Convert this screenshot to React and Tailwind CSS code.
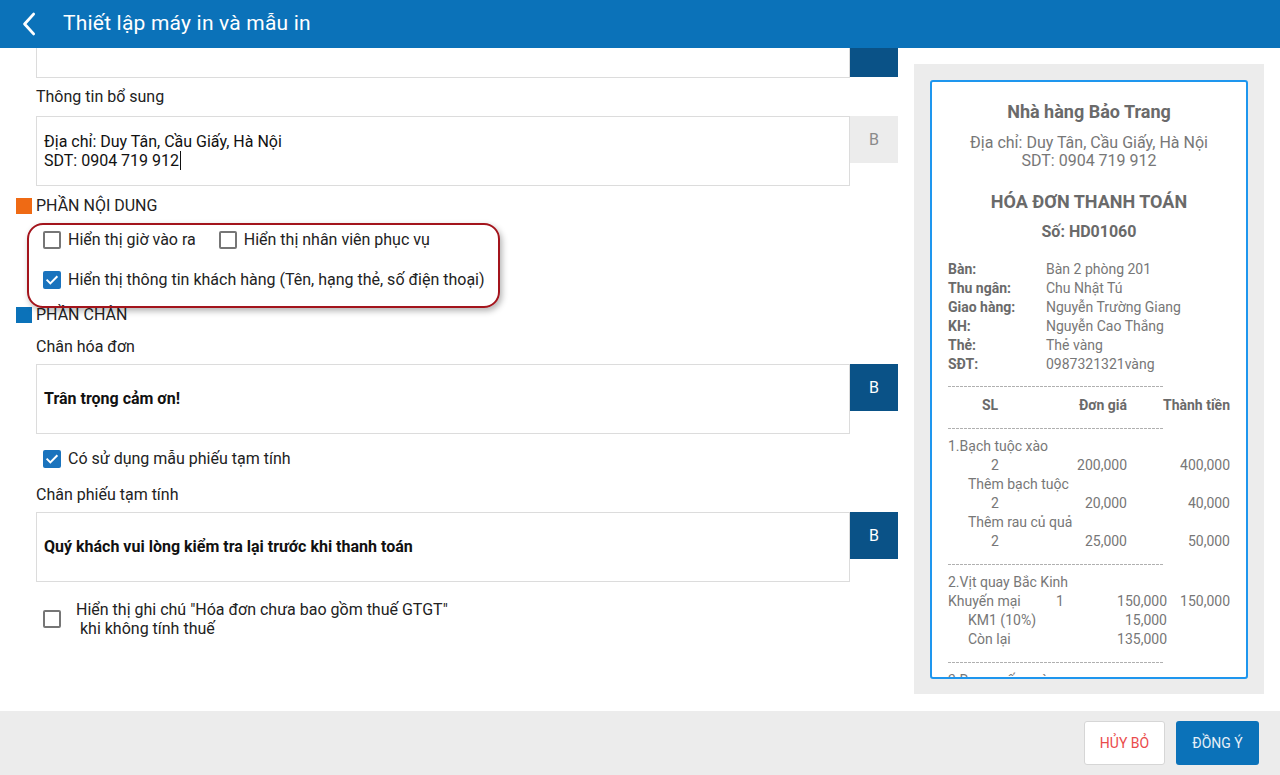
import React from "react";

function Checkbox({ checked }) {
  if (checked) {
    return (
      <span className="flex h-[18px] w-[18px] shrink-0 items-center justify-center rounded-[2px] bg-[#1a73bd]">
        <svg viewBox="0 0 24 24" className="h-4 w-4" fill="none" stroke="white" strokeWidth="3" strokeLinecap="square">
          <path d="M5 12.5l4.5 4.5L19 7.5" />
        </svg>
      </span>
    );
  }
  return <span className="block h-[18px] w-[18px] shrink-0 rounded-[2px] border-2 border-[#767676]" />;
}

function BButton({ dark }) {
  return (
    <button
      type="button"
      className={
        dark
          ? "flex h-[47px] w-12 items-center justify-center bg-[#0a5287] text-[16px] text-white"
          : "flex h-[47px] w-12 items-center justify-center bg-[#ececec] text-[16px] text-[#8a8a8a]"
      }
    >
      B
    </button>
  );
}

function Heading({ color, children }) {
  return (
    <div className="flex h-[30px] items-center gap-1 text-[16px] text-[#222]">
      <span className={`h-4 w-4 ${color}`} />
      <span>{children}</span>
    </div>
  );
}

function Dashes() {
  return <div className="h-px w-[215px] bg-[repeating-linear-gradient(90deg,#b0b0b0_0_3px,transparent_3px_4px)]" />;
}

const info = [
  ["Bàn:", "Bàn 2 phòng 201"],
  ["Thu ngân:", "Chu Nhật Tú"],
  ["Giao hàng:", "Nguyễn Trường Giang"],
  ["KH:", "Nguyễn Cao Thắng"],
  ["Thẻ:", "Thẻ vàng"],
  ["SĐT:", "0987321321vàng"],
];

function ItemRow({ qty, price, total }) {
  return (
    <div className="flex h-[19px] items-center">
      <span className="w-[94px] text-center">{qty}</span>
      <span className="w-[85px] text-right">{price}</span>
      <span className="flex-1 text-right">{total}</span>
    </div>
  );
}

function Receipt() {
  return (
    <div className="h-[599px] overflow-hidden rounded-[3px] border-2 border-[#1e96ee] bg-white text-[#777]">
      <div className="pt-[18px] text-center">
        <div className="text-[18px] font-bold leading-6 text-[#6a6a6a]">Nhà hàng Bảo Trang</div>
        <div className="mt-[10px] text-[16px] leading-[18px]">
          <div>Địa chỉ: Duy Tân, Cầu Giấy, Hà Nội</div>
          <div>SDT: 0904 719 912</div>
        </div>
        <div className="mt-5 text-[18px] font-bold leading-6 text-[#6a6a6a]">HÓA ĐƠN THANH TOÁN</div>
        <div className="mt-2 text-[16px] font-bold leading-5 text-[#6a6a6a]">Số: HD01060</div>
      </div>
      <div className="px-4 text-[14px]">
        <div className="mt-[18px]">
          {info.map(([k, v]) => (
            <div key={k} className="flex h-[19px] items-center">
              <span className="w-[98px] font-bold text-[#6a6a6a]">{k}</span>
              <span>{v}</span>
            </div>
          ))}
        </div>
        <div className="mt-3">
          <Dashes />
        </div>
        <div className="mt-[9px] flex h-[19px] items-center font-bold text-[#6a6a6a]">
          <span className="w-[84px] text-center">SL</span>
          <span className="w-[95px] text-right">Đơn giá</span>
          <span className="flex-1 text-right">Thành tiền</span>
        </div>
        <div className="mt-[13px]">
          <Dashes />
        </div>
        <div className="mt-2">
          <div className="flex h-[19px] items-center">1.Bạch tuộc xào</div>
          <ItemRow qty="2" price="200,000" total="400,000" />
          <div className="flex h-[19px] items-center pl-5">Thêm bạch tuộc</div>
          <ItemRow qty="2" price="20,000" total="40,000" />
          <div className="flex h-[19px] items-center pl-5">Thêm rau củ quả</div>
          <ItemRow qty="2" price="25,000" total="50,000" />
        </div>
        <div className="mt-[13px]">
          <Dashes />
        </div>
        <div className="mt-2">
          <div className="flex h-[19px] items-center">2.Vịt quay Bắc Kinh</div>
          <div className="flex h-[19px] items-center">
            <span className="w-[108px]">Khuyến mại</span>
            <span className="w-5">1</span>
            <span className="w-[91px] text-right">150,000</span>
            <span className="flex-1 text-right">150,000</span>
          </div>
          <div className="flex h-[19px] w-[219px] items-center justify-between pl-5">
            <span>KM1 (10%)</span>
            <span>15,000</span>
          </div>
          <div className="flex h-[19px] w-[219px] items-center justify-between pl-5">
            <span>Còn lại</span>
            <span>135,000</span>
          </div>
        </div>
        <div className="mt-[13px]">
          <Dashes />
        </div>
        <div className="mt-2">
          <div className="flex h-[19px] items-center">3.Rau muống xào</div>
        </div>
      </div>
    </div>
  );
}

export default function App() {
  return (
    <div className="flex h-[775px] w-[1280px] flex-col overflow-hidden bg-white font-['Roboto',sans-serif]">
      <header className="flex h-12 shrink-0 items-center bg-[#0b72b9] text-white">
        <button type="button" className="ml-[20px] flex h-8 w-5 items-center justify-center">
          <svg viewBox="0 0 20 28" className="h-[26px] w-[18px]" fill="none" stroke="white" strokeWidth="3.2" strokeLinecap="round" strokeLinejoin="round">
            <path d="M14 3L4 14l10 11" />
          </svg>
        </button>
        <h1 className="ml-[23px] text-[21px] font-normal tracking-[0.2px]">Thiết lập máy in và mẫu in</h1>
      </header>

      <main className="flex flex-1">
        <section className="w-[898px] pl-4">
          <div className="flex">
            <div className="ml-5 h-[30px] w-[814px] border-x border-b border-[#dcdcdc]" />
            <div className="h-[29px] w-12 bg-[#0a5287]" />
          </div>

          <div className="flex h-[38px] items-center pl-5 text-[16px] text-[#222]">Thông tin bổ sung</div>
          <div className="flex pl-5">
            <div className="flex h-[70px] w-[814px] flex-col justify-center border border-[#dcdcdc] pl-[7px] text-[16px] leading-[19px] text-[#111]">
              <div>Địa chỉ: Duy Tân, Cầu Giấy, Hà Nội</div>
              <div className="flex items-center">
                SDT: 0904 719 912
                <span className="ml-px inline-block h-[19px] w-px bg-[#111]" />
              </div>
            </div>
            <BButton />
          </div>

          <div className="flex h-[38px] items-center gap-1 pt-px text-[16px] text-[#222]">
            <span className="h-4 w-4 bg-[#ef6a14]" />
            <span>PHẦN NỘI DUNG</span>
          </div>

          <div className="relative">
            <div className="pointer-events-none absolute left-[11px] top-[-1px] h-[85px] w-[473px] rounded-[16px] border-2 border-[#a3141c] shadow-[2px_3px_6px_rgba(0,0,0,0.3)]" />
            <div className="flex h-[32px] items-center pl-[27px] text-[16px] text-[#222]">
              <Checkbox />
              <span className="ml-[7px]">Hiển thị giờ vào ra</span>
              <span className="ml-[23px] flex">
                <Checkbox />
              </span>
              <span className="ml-[7px]">Hiển thị nhân viên phục vụ</span>
            </div>
            <div className="flex h-[44px] items-center pl-[27px] pt-1 text-[16px] text-[#222]">
              <Checkbox checked />
              <span className="ml-[7px]">Hiển thị thông tin khách hàng (Tên, hạng thẻ, số điện thoại)</span>
            </div>
          </div>

          <Heading color="bg-[#0b72b9]">PHẦN CHÂN</Heading>

          <div className="pl-5">
            <div className="flex h-[34px] items-center text-[16px] text-[#222]">Chân hóa đơn</div>
            <div className="flex">
              <div className="flex h-[70px] w-[814px] items-center border border-[#dcdcdc] pl-[7px] text-[16px] font-bold text-[#111]">
                Trân trọng cảm ơn!
              </div>
              <BButton dark />
            </div>

            <div className="flex h-[44px] items-center pl-[7px] pt-[6px] text-[16px] text-[#222]">
              <Checkbox checked />
              <span className="ml-[7px]">Có sử dụng mẫu phiếu tạm tính</span>
            </div>

            <div className="flex h-[34px] items-center text-[16px] text-[#222]">Chân phiếu tạm tính</div>
            <div className="flex">
              <div className="flex h-[70px] w-[814px] items-center border border-[#dcdcdc] pl-[7px] text-[16px] font-bold text-[#111]">
                Quý khách vui lòng kiểm tra lại trước khi thanh toán
              </div>
              <BButton dark />
            </div>

            <div className="mt-[18px] flex items-center pl-[7px] text-[16px] leading-[19px] text-[#222]">
              <Checkbox />
              <div className="ml-[15px]">
                <div>Hiển thị ghi chú "Hóa đơn chưa bao gồm thuế GTGT"</div>
                <div>&nbsp;khi không tính thuế</div>
              </div>
            </div>
          </div>
        </section>

        <aside className="ml-4 mt-4 h-[630px] w-[350px] bg-[#ececec] p-4 pb-0">
          <Receipt />
        </aside>
      </main>

      <footer className="flex h-16 shrink-0 items-center justify-end gap-[11px] bg-[#ececec] pr-[21px]">
        <button type="button" className="h-11 w-[81px] rounded-[3px] border border-[#d6d6d6] bg-white text-[14px] text-[#ea4b4b]">
          HỦY BỎ
        </button>
        <button type="button" className="h-11 w-[83px] rounded-[3px] bg-[#0b72b9] text-[14px] text-[#e6f0f8]">
          ĐỒNG Ý
        </button>
      </footer>
    </div>
  );
}
